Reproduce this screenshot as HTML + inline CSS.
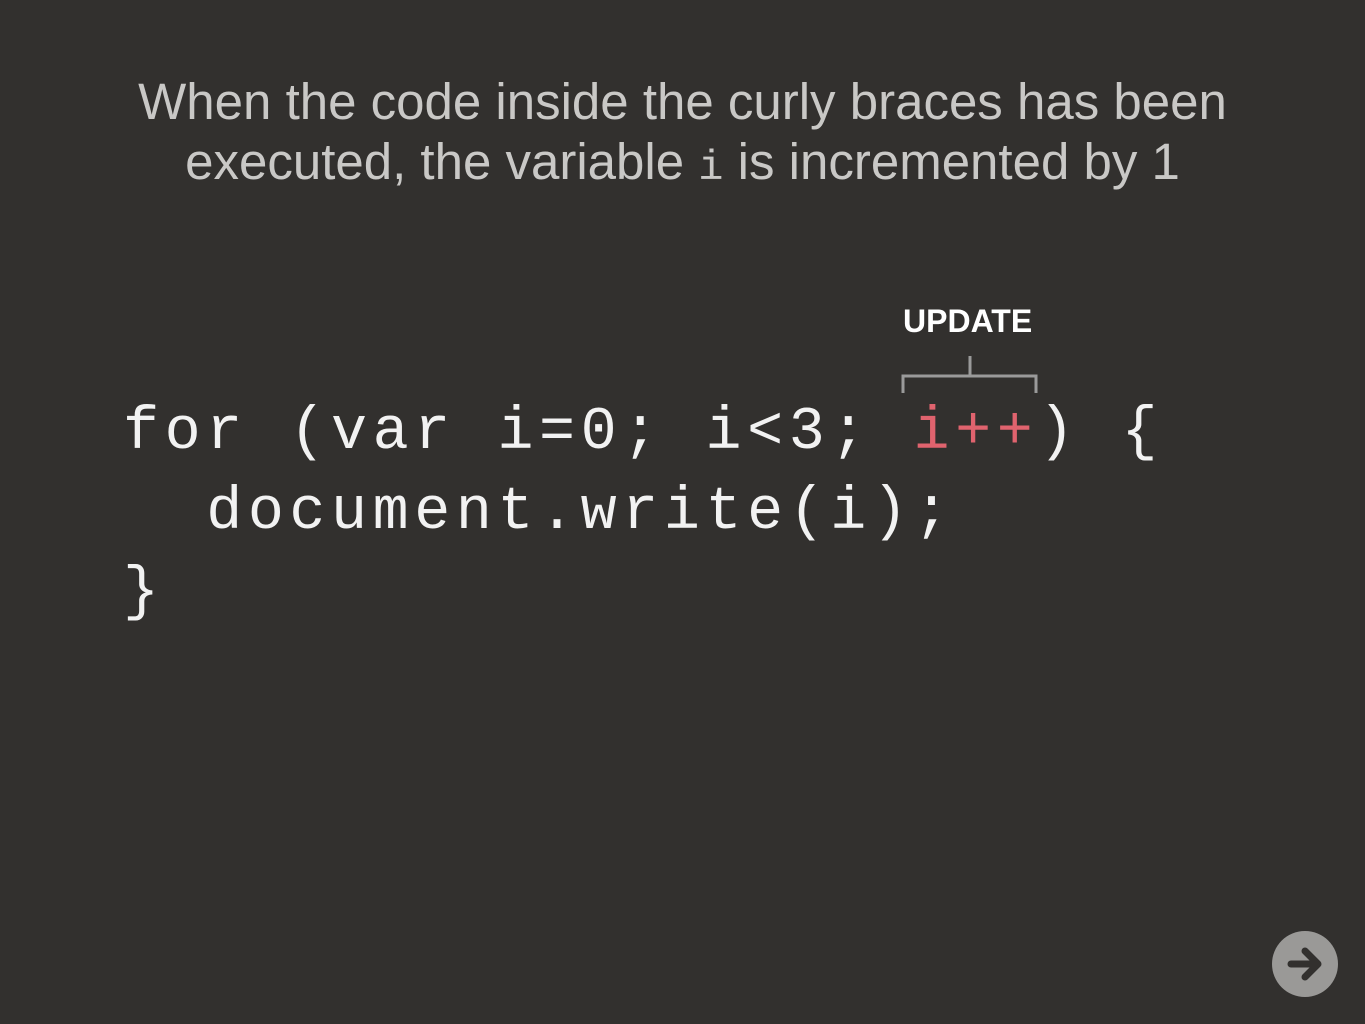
<!DOCTYPE html>
<html><head><style>
html,body{margin:0;padding:0;}
body{width:1365px;height:1024px;background:#32302e;position:relative;overflow:hidden;font-family:"Liberation Sans",sans-serif;}
.t{position:absolute;left:0;width:1365px;text-align:center;color:#c9c8c6;font-size:51px;line-height:60px;top:72px;}
.t code{font-family:"Liberation Mono",monospace;font-size:42px;}
.code{position:absolute;left:123px;top:393px;font-family:"Liberation Mono",monospace;font-size:60px;letter-spacing:5.6px;line-height:80px;color:#f2f2f2;white-space:pre;}
.r{color:#e0636e;}
.up{position:absolute;left:903px;top:303px;color:#fff;font-weight:bold;font-size:32px;}
</style></head><body>
<div class="t">When the code inside the curly braces has been<br>executed, the variable <code>i</code> is incremented by 1</div>
<div class="up">UPDATE</div>
<svg style="position:absolute;left:0;top:0" width="1365" height="1024"><path d="M903 393V376H1036V393M970 356V376" stroke="#9a9a9a" stroke-width="3" fill="none"/>
<circle cx="1305" cy="964" r="33" fill="#9a9997"/>
<path d="M1291 964H1317M1305 951L1318 964L1305 977" stroke="#32302e" stroke-width="7" stroke-linecap="round" stroke-linejoin="round" fill="none"/></svg>
<div class="code">for (var i=0; i&lt;3; <span class="r">i++</span>) {
  document.write(i);
}</div>
</body></html>
